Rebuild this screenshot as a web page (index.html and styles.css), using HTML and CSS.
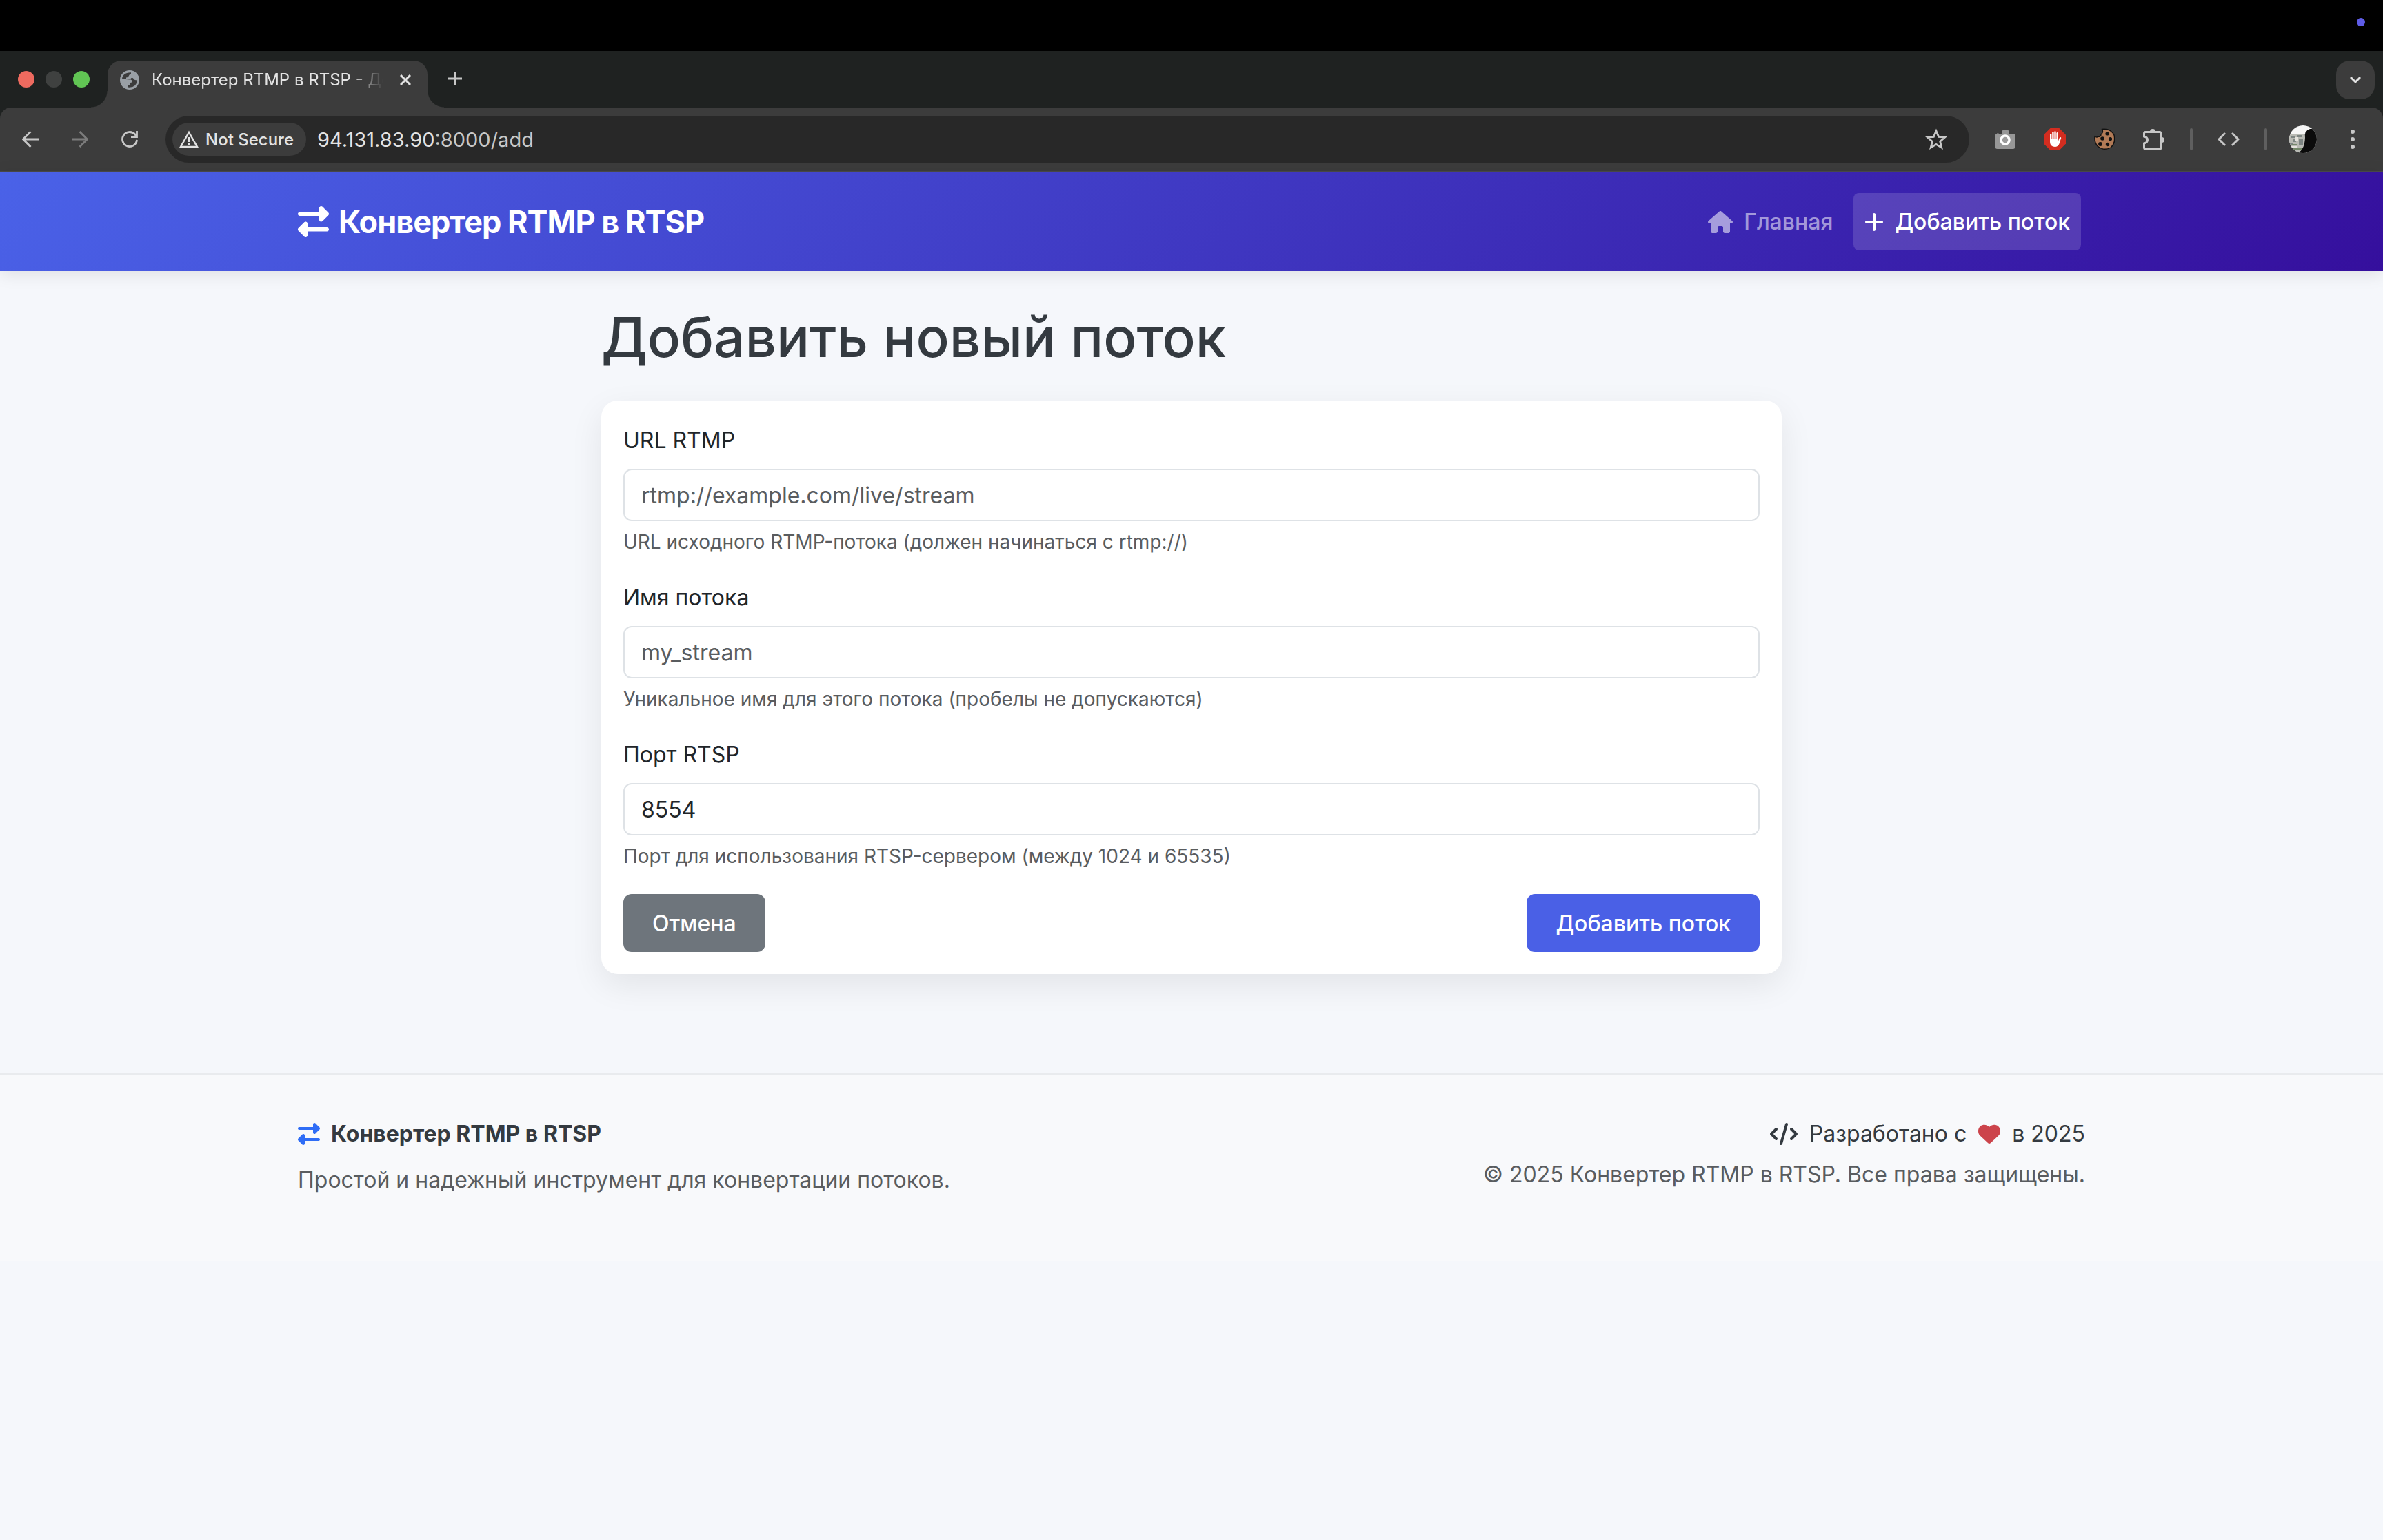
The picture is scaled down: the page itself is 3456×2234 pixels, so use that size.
FILE: index.html
```html
<!DOCTYPE html>
<html lang="ru">
<head>
<meta charset="utf-8">
<meta name="viewport" content="width=device-width, initial-scale=1">
<title>Конвертер RTMP в RTSP - Добавить поток</title>
<link rel="stylesheet" href="styles.css">
</head>
<body>
<svg class="sprite" aria-hidden="true">
  <symbol id="swap" viewBox="0 0 512 512"><path d="M32 96l320 0V32c0-12.900 7.800-24.600 19.800-29.600s25.700-2.200 34.900 6.900l96 96c6 6 9.400 14.100 9.400 22.600s-3.400 16.600-9.400 22.600l-96 96c-9.200 9.200-22.900 11.900-34.900 6.900s-19.800-16.600-19.800-29.600V160L32 160c-17.700 0-32-14.300-32-32s14.300-32 32-32zM480 352c17.700 0 32 14.300 32 32s-14.300 32-32 32H160v64c0 12.900-7.800 24.600-19.800 29.600s-25.700 2.200-34.900-6.900l-96-96c-6-6-9.400-14.100-9.400-22.600s3.400-16.600 9.400-22.600l96-96c9.200-9.200 22.900-11.900 34.900-6.900s19.800 16.600 19.800 29.600l0 64H480z"/></symbol>
</svg>

<div class="menubar"><span class="menubar-dot"></span></div>

<div class="tabstrip">
  <div class="lights"><i class="light red"></i><i class="light grey"></i><i class="light green"></i></div>
  <div class="tab">
    <svg class="globe" viewBox="0 0 28 28"><circle cx="14" cy="14" r="14" fill="#9aa0a6"/><path d="M3 12.500C3.500 7 8 3 16 3.300V5.500Q13 6 12.500 8.500Q12 10.500 9 10.500V13H14Q18 13.500 17.500 16.500Q17 18 15 18V21H11V24.500Q24 26 25 14Q21 15 20 12.500Q18 9.500 15.500 12L14 13.500z" fill="#3c3c3c"/></svg>
    <span class="tab-title">Конвертер RTMP в RTSP - Добавить поток</span>
    <button class="bare tab-close" type="button" aria-label="Закрыть вкладку"><svg class="i16" viewBox="0 0 16 16"><path d="M1 1l14 14M15 1L1 15" fill="none" stroke="#e3e3e3" stroke-width="3"/></svg></button>
  </div>
  <button class="bare new-tab" type="button" aria-label="Новая вкладка"><svg class="i20" viewBox="0 0 20 20"><path d="M10 0v20M0 10h20" fill="none" stroke="#c7c7c7" stroke-width="3"/></svg></button>
  <button class="bare tab-search" type="button" aria-label="Поиск вкладок"><svg class="i16" viewBox="0 0 16 16"><path d="M1 4l7 7 7-7" fill="none" stroke="#e3e3e3" stroke-width="3"/></svg></button>
</div>

<div class="toolbar-back">
<div class="toolbar">
  <div class="history">
    <button class="bare" type="button" aria-label="Назад"><svg class="i24" viewBox="0 0 24 24"><path d="M24 12H2M12.500 1L1.500 12l11 11" fill="none" stroke="#c7c7c7" stroke-width="2.800"/></svg></button>
    <button class="bare" type="button" aria-label="Вперёд"><svg class="i24" viewBox="0 0 24 24"><path d="M0 12h22M11.500 1l11 11-11 11" fill="none" stroke="#7c7c7c" stroke-width="2.800"/></svg></button>
    <button class="bare" type="button" aria-label="Обновить"><svg class="i24" viewBox="0 0 24 24"><path d="M22.500 13A10.500 10.500 0 1 1 19.500 4.600L22 7.500M22.500 0v8.500H14" fill="none" stroke="#c7c7c7" stroke-width="2.800"/></svg></button>
  </div>
  <div class="omnibox">
    <button class="bare chip" type="button"><svg class="warn" viewBox="0 0 28 26"><path d="M14 3L26 24H2z" fill="none" stroke="#e3e3e3" stroke-width="2.500"/><path d="M14 10v7M14 19v3" stroke="#e3e3e3" stroke-width="2.500"/></svg>Not Secure</button>
    <div class="url">94.131.83.90<span>:8000/add</span></div>
    <button class="bare" type="button" aria-label="В закладки"><svg class="i32" viewBox="0 0 32 32"><path d="M16 4l3.600 8.400 9 .800-6.900 6 2.100 8.900L16 23.300l-7.800 4.800 2.100-8.900-6.900-6 9-.800z" fill="none" stroke="#c7c7c7" stroke-width="2.800"/></svg></button>
  </div>
  <div class="extensions">
    <svg class="i32" viewBox="0 0 32 32"><path d="M4 8q1-2 3 0h4V5q0-2 2-2h7q2 0 2 2v3h5q4 0 4 4v14q0 4-4 4H5q-4 0-4-4V12q0-3 3-4z" fill="#979797"/><circle cx="16" cy="17" r="6" fill="#9c9c9c" stroke="#fff" stroke-width="3.500"/></svg>
    <svg class="i32" viewBox="0 0 32 32"><path d="M9.500 0h13L32 9.500v13L22.500 32h-13L0 22.500v-13z" fill="#d32d20"/><path d="M9 9q1.200-2 2.400 0v7h.800V6q1.200-2 2.400 0v9h.700V5q1.200-2 2.400 0v10h.700V7q1.200-2 2.400 0v12l2-5q1.500-2 2.500 0l-3 9q-2 4-6 4-7 0-7.300-7z" fill="#fff"/></svg>
    <svg class="i32" viewBox="0 0 32 32"><path d="M12.500 1.500Q25 0 30 10q2.500 12-5 18-10 5.500-19-2-5-6-4-14 3 2 5 0 4 1 4-3 4-3 1.500-7.500z" fill="#b17a56" stroke="#111" stroke-width="1.400"/><g fill="#111"><circle cx="20" cy="8" r="2.600"/><circle cx="13" cy="15" r="2.800"/><circle cx="24.500" cy="15.500" r="2.600"/><circle cx="10" cy="23" r="2.900"/><circle cx="20.500" cy="23.500" r="2.700"/></g></svg>
    <svg class="i32 puzzle" viewBox="0 0 32 32"><path d="M1.500 12V7.500q0-2 2-2H24q2 0 2 2V28q0 2-2 2H3.500q-2 0-2-2v-6q5-1 5-5t-5-5z" fill="none" stroke="#c7c7c7" stroke-width="3"/><path d="M10 5a4 4 0 0 1 8 0zM27 13a4 4 0 0 1 0 8z" fill="#c7c7c7"/></svg>
    <i class="sep"></i>
    <svg class="i32" viewBox="0 0 32 32"><path d="M11 7L2 16l9 9M21 7l9 9-9 9" fill="none" stroke="#c7c7c7" stroke-width="3"/></svg>
    <i class="sep"></i>
    <svg class="avatar" viewBox="0 0 40 40"><clipPath id="face"><circle cx="20" cy="20" r="20"/></clipPath><g clip-path="url(#face)"><path fill="#f6f6f6" d="M0 0h40v40H0z"/><path fill="#b9bab4" d="M0 12h26v28H0z"/><path fill="#7d8582" d="M2 15h6v3H2zM11 14h7v3h-7zM5 20h5v4H5zM14 19h6v9h-6zM1 25h4v3H1z"/><path fill="#e4e2dc" d="M9 17h4v6H9zM2 30h10v2H2z"/><path fill="#74886a" d="M4 27h8v2H4zM3 33h17v3H3z"/><path fill="#0b0b0b" d="M23 18q-2-10 7-13h10v35H12q10-4 11-22z"/></g></svg>
    <svg class="dots" viewBox="0 0 8 28"><circle cx="4" cy="3" r="3"/><circle cx="4" cy="14" r="3"/><circle cx="4" cy="25" r="3"/></svg>
  </div>
</div>
</div>

<header class="navbar">
  <div class="container navbar-inner">
    <a class="brand" href="#"><svg class="brand-icon"><use href="#swap"/></svg>Конвертер RTMP в RTSP</a>
    <nav class="nav">
      <a class="nav-link" href="#"><svg class="fa-home" viewBox="0 0 576 512"><path d="M575.800 255.500c0 18-15 32.100-32 32.100h-32l.7 160.200c0 2.700-.2 5.400-.5 8.100V472c0 22.100-17.900 40-40 40H456c-1.100 0-2.200 0-3.300-.1c-1.400 .1-2.800 .1-4.200 .1H416 392c-22.100 0-40-17.900-40-40V448 384c0-17.700-14.300-32-32-32H256c-17.700 0-32 14.300-32 32v64 24c0 22.100-17.900 40-40 40H160 128.100c-1.500 0-3-.1-4.500-.2c-1.200 .1-2.400 .2-3.600 .2H104c-22.100 0-40-17.900-40-40V360c0-.9 0-1.900 .1-2.800V287.600H32c-18 0-32-14-32-32.100c0-9 3-17 10-24L266.400 8c7-7 15-8 22-8s15 2 21 7L564.800 231.500c8 7 12 15 11 24z"/></svg>Главная</a>
      <a class="nav-link active" href="#"><svg class="fa-plus" viewBox="0 0 448 512"><path d="M256 80c0-17.700-14.300-32-32-32s-32 14.300-32 32V224H48c-17.700 0-32 14.300-32 32s14.300 32 32 32H192V432c0 17.700 14.300 32 32 32s32-14.300 32-32V288H400c17.700 0 32-14.300 32-32s-14.300-32-32-32H256V80z"/></svg>Добавить поток</a>
    </nav>
  </div>
</header>

<main class="content">
  <h1>Добавить новый поток</h1>
  <form class="card">
    <div class="field">
      <label for="url">URL RTMP</label>
      <input id="url" type="text" placeholder="rtmp://example.com/live/stream">
      <p class="hint">URL исходного RTMP-потока (должен начинаться с rtmp://)</p>
    </div>
    <div class="field">
      <label for="name">Имя потока</label>
      <input id="name" type="text" placeholder="my_stream">
      <p class="hint">Уникальное имя для этого потока (пробелы не допускаются)</p>
    </div>
    <div class="field">
      <label for="port">Порт RTSP</label>
      <input id="port" type="text" inputmode="numeric" value="8554">
      <p class="hint">Порт для использования RTSP-сервером (между 1024 и 65535)</p>
    </div>
    <div class="actions">
      <button class="btn secondary" type="button">Отмена</button>
      <button class="btn primary" type="submit">Добавить поток</button>
    </div>
  </form>
</main>

<footer class="footer">
  <div class="container footer-inner">
    <div>
      <h2><svg class="fa-swap"><use href="#swap"/></svg>Конвертер RTMP в RTSP</h2>
      <p class="muted">Простой и надежный инструмент для конвертации потоков.</p>
    </div>
    <div class="credits">
      <p class="made"><svg class="fa-code" viewBox="0 0 640 512"><path d="M392.800 1.200c-17-4.900-34.700 5-39.600 22l-128 448c-4.900 17 5 34.700 22 39.600s34.700-5 39.600-22l128-448c4.900-17-5-34.700-22-39.600zm80.600 120.100c-12.500 12.500-12.500 32.800 0 45.300L562.700 256l-89.400 89.400c-12.500 12.500-12.500 32.800 0 45.300s32.800 12.500 45.300 0l112-112c12.500-12.500 12.500-32.800 0-45.300l-112-112c-12.500-12.500-32.800-12.500-45.300 0zm-306.700 0c-12.500-12.500-32.800-12.500-45.300 0l-112 112c-12.500 12.500-12.500 32.800 0 45.300l112 112c12.500 12.500 32.800 12.500 45.300 0s12.500-32.800 0-45.300L77.300 256l89.400-89.400c12.500-12.500 12.500-32.800 0-45.300z"/></svg><span>Разработано с</span><svg class="fa-heart" viewBox="0 0 512 512"><path d="M47.600 300.400L228.300 469.100c7.500 7 17.400 10.900 27.700 10.900s20.200-3.900 27.700-10.900L464.400 300.400c30.400-28.300 47.600-68 47.600-109.500v-5.800c0-69.900-50.500-129.500-119.400-141C347 36.500 300.600 51.400 268 84L256 96 244 84c-32.600-32.600-79-47.500-124.600-39.900C50.500 55.600 0 115.200 0 185.100v5.800c0 41.500 17.200 81.200 47.600 109.500z"/></svg><span>в 2025</span></p>
      <p class="muted">© 2025 Конвертер RTMP в RTSP. Все права защищены.</p>
    </div>
  </div>
</footer>
</body>
</html>
```
FILE: styles.css
```css
* { box-sizing: border-box; }

body {
  margin: 0;
  min-height: 100vh;
  background: #f5f7fb;
  color: #212529;
  font-family: Inter, "Liberation Sans", sans-serif;
  font-size: 32px;
  line-height: 51px;
}

h1, h2, p { margin: 0; }
svg { display: block; flex: none; fill: currentColor; }
a { color: inherit; text-decoration: none; }
.sprite { position: absolute; width: 0; height: 0; }

.bare {
  display: flex;
  align-items: center;
  justify-content: center;
  padding: 0;
  border: 0;
  background: none;
  color: #e3e3e3;
  font: inherit;
}

.i16 { width: 16px; height: 16px; }
.i20 { width: 20px; height: 20px; }
.i24 { width: 24px; height: 24px; }
.i32 { width: 32px; height: 32px; }

/* System menu bar */
.menubar {
  display: flex;
  align-items: center;
  justify-content: flex-end;
  height: 74px;
  padding: 0 26px 10px 0;
  background: #000;
}
.menubar-dot { width: 12px; height: 12px; border-radius: 50%; background: #5e5ce6; }

/* Browser tabs */
.tabstrip {
  display: flex;
  align-items: flex-start;
  height: 82px;
  padding: 14px 12px 0 26px;
  background: #1f2221;
}
.lights { display: flex; gap: 16px; width: 130px; padding-top: 15px; }
.light { width: 24px; height: 24px; border-radius: 50%; }
.red { background: #ed6a5f; }
.grey { background: #3f4140; }
.green { background: #61c554; }
.tab {
  position: relative;
  display: flex;
  align-items: center;
  width: 464px;
  height: 68px;
  padding: 0 24px 12px 18px;
  border-radius: 20px 20px 0 0;
  background: #3c3c3c;
}
.tab::before, .tab::after {
  content: "";
  position: absolute;
  bottom: 0;
  width: 24px;
  height: 24px;
}
.tab::before { right: 100%; background: radial-gradient(circle at 0 0, transparent 23px, #3c3c3c 24px); }
.tab::after { left: 100%; background: radial-gradient(circle at 100% 0, transparent 23px, #3c3c3c 24px); }
.globe { width: 28px; height: 28px; margin-right: 18px; }
.tab-title {
  flex: 1;
  overflow: hidden;
  white-space: nowrap;
  color: #e3e3e3;
  font-size: 24px;
  line-height: 32px;
  -webkit-mask-image: linear-gradient(90deg, #000 calc(100% - 48px), transparent);
  mask-image: linear-gradient(90deg, #000 calc(100% - 48px), transparent);
}
.tab-close { margin-left: 24px; }
.new-tab { height: 52px; margin-left: 30px; }
.tab-search {
  width: 56px;
  height: 56px;
  margin-left: auto;
  border-radius: 20px;
  background: #3c3c3c;
}

/* Browser toolbar */
.toolbar-back { background: #1f2221; }
.toolbar {
  display: flex;
  align-items: center;
  height: 94px;
  padding: 0 40px 0 32px;
  border-bottom: 2px solid #4a4a4a;
  border-radius: 16px 16px 0 0;
  background: #3c3c3c;
}
.history { display: flex; gap: 48px; margin-right: 40px; }
.omnibox {
  display: flex;
  flex: 1;
  align-items: center;
  height: 68px;
  padding: 0 32px 0 10px;
  border-radius: 34px;
  background: #282828;
}
.chip {
  gap: 10px;
  height: 48px;
  padding: 0 18px 0 10px;
  border-radius: 24px;
  background: #3c3c3c;
  font-size: 24px;
  font-weight: 500;
}
.warn { width: 28px; height: 26px; }
.url { flex: 1; padding-left: 16px; color: #e3e3e3; font-size: 29px; }
.url span { color: #c7c7c7; }
.extensions { display: flex; align-items: center; gap: 40px; margin-left: 36px; }
.sep { width: 4px; height: 32px; margin: 0 -4px; border-radius: 2px; background: #5f5f5f; }
.avatar { width: 40px; height: 40px; margin-left: -4px; }
.dots { width: 8px; height: 28px; margin-left: 8px; color: #c7c7c7; }

/* Site header */
.container { max-width: 2640px; margin: 0 auto; padding: 0 24px; }
.navbar {
  padding: 30px 0;
  background: linear-gradient(135deg, #4a62e8, #350f9d);
  box-shadow: 0 4px 24px rgba(0, 0, 0, 0.1);
  color: #fff;
}
.navbar-inner, .brand, .nav, .nav-link { display: flex; align-items: center; }
.navbar-inner { justify-content: space-between; }
.brand { gap: 14px; font-size: 45px; font-weight: 700; letter-spacing: -1px; }
.brand-icon { width: 45px; height: 45px; }
.nav { gap: 2px; }
.nav-link {
  gap: 16px;
  margin: 0 6px;
  padding: 16px;
  border-radius: 8px;
  color: rgba(255, 255, 255, 0.55);
  font-weight: 500;
}
.nav-link.active { background: rgba(255, 255, 255, 0.15); color: #fff; }
.fa-home { width: 36px; height: 32px; }
.fa-plus { width: 28px; height: 32px; }

/* Form */
.content { max-width: 1760px; margin: 0 auto; padding: 48px 24px 144px; }
h1 { margin-bottom: 44px; color: #343a40; font-size: 80px; font-weight: 500; line-height: 96px; }
.card {
  padding: 32px;
  border-radius: 24px;
  background: #fff;
  box-shadow: 0 16px 48px rgba(0, 0, 0, 0.08);
}
.field { margin-bottom: 32px; }
.field label { display: block; margin-bottom: 16px; }
.field input {
  display: block;
  width: 100%;
  height: 76px;
  padding: 0 24px;
  border: 2px solid #dee2e6;
  border-radius: 12px;
  background: #fff;
  color: #212529;
  font: inherit;
}
.field input::placeholder { color: #595c5f; opacity: 1; }
.hint { margin-top: 8px; color: #595c5f; font-size: 28px; line-height: 45px; }
.actions { display: flex; justify-content: space-between; }
.btn {
  height: 84px;
  padding: 0 42px;
  border: 0;
  border-radius: 12px;
  color: #fff;
  font: inherit;
  font-weight: 500;
}
.secondary { background: #6e757c; }
.primary { background: #4a60e6; }

/* Footer */
.footer { padding: 60px 0 92px; border-top: 2px solid #e9ebee; background: #f8f9fb; }
.footer-inner { display: flex; justify-content: space-between; }
h2, .made { display: flex; align-items: center; gap: 16px; color: #343a40; }
h2 { margin-bottom: 16px; font-size: 32px; font-weight: 700; }
.muted { color: #595c5f; }
.fa-swap { width: 32px; height: 32px; color: #2f6df6; }
.credits { text-align: right; }
.made { justify-content: flex-end; gap: 17px; margin-bottom: 8px; }
.fa-code { width: 40px; height: 32px; }
.fa-heart { width: 32px; height: 32px; color: #cc444b; }
```
